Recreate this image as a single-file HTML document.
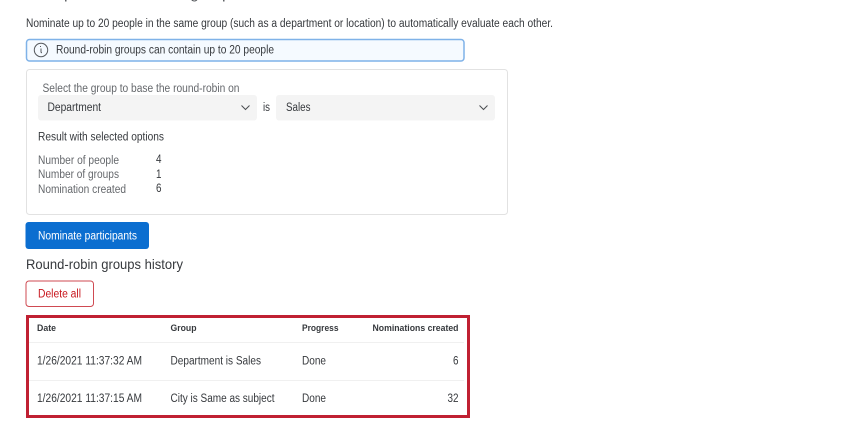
<!DOCTYPE html>
<html>
<head>
<meta charset="utf-8">
<style>
html,body{margin:0;padding:0;background:#fff;width:850px;height:425px;overflow:hidden}
svg{display:block}
text{font-family:"Liberation Sans",sans-serif;font-size:11.5px;fill:#36393d}
.g{fill:#65686c}
.h{font-size:9.5px;font-weight:bold;fill:#36393d}
</style>
</head>
<body>
<svg width="850" height="425" viewBox="0 0 850 425" xmlns="http://www.w3.org/2000/svg">
<text x="64" y="-2" style="font-size:16px;fill:#55585c">p</text>
<text x="190" y="-2" style="font-size:16px;fill:#55585c">g</text>
<text x="222" y="-2" style="font-size:16px;fill:#55585c">p</text>

<text x="26" y="27" textLength="527" lengthAdjust="spacingAndGlyphs">Nominate up to 20 people in the same group (such as a department or location) to automatically evaluate each other.</text>

<rect x="26.500" y="39.500" width="437.500" height="21.500" rx="3" fill="#f5faff" stroke="#7fb2e8" stroke-width="1.500"/>
<circle cx="41" cy="50" r="6.700" fill="none" stroke="#55585c" stroke-width="1"/>
<path d="M40 46.500h1M41 48.500v3.200q0 1 1 1" fill="none" stroke="#55585c" stroke-width="1"/>
<text x="56" y="53.500" textLength="218" lengthAdjust="spacingAndGlyphs">Round-robin groups can contain up to 20 people</text>

<rect x="26.500" y="69.500" width="481" height="145" rx="3" fill="#fff" stroke="#e2e2e2"/>
<text x="42.500" y="92" class="g" textLength="197" lengthAdjust="spacingAndGlyphs">Select the group to base the round-robin on</text>

<rect x="38" y="95" width="219" height="25.500" rx="3" fill="#f4f4f4"/>
<text x="47.500" y="111" textLength="53.500" lengthAdjust="spacingAndGlyphs">Department</text>
<path d="M241.500 105.500l4 4 4-4" fill="none" stroke="#4a4d51" stroke-width="1"/>
<text x="263" y="111" textLength="7" lengthAdjust="spacingAndGlyphs">is</text>
<rect x="276" y="95" width="219" height="25.500" rx="3" fill="#f4f4f4"/>
<text x="286" y="111" textLength="24.500" lengthAdjust="spacingAndGlyphs">Sales</text>
<path d="M479.500 105.500l4 4 4-4" fill="none" stroke="#4a4d51" stroke-width="1"/>

<text x="38" y="140.500" textLength="126" lengthAdjust="spacingAndGlyphs">Result with selected options</text>
<text x="38" y="164" class="g" textLength="81" lengthAdjust="spacingAndGlyphs">Number of people</text>
<text x="38" y="178" class="g" textLength="81" lengthAdjust="spacingAndGlyphs">Number of groups</text>
<text x="38" y="193" class="g" textLength="88" lengthAdjust="spacingAndGlyphs">Nomination created</text>
<text x="156" y="163" textLength="5.500" lengthAdjust="spacingAndGlyphs">4</text>
<text x="156" y="178" textLength="5.500" lengthAdjust="spacingAndGlyphs">1</text>
<text x="156" y="192" textLength="5.500" lengthAdjust="spacingAndGlyphs">6</text>

<rect x="25.500" y="222" width="123.500" height="27" rx="3" fill="#0b6ed0"/>
<text x="38" y="239.500" style="fill:#fff" textLength="99" lengthAdjust="spacingAndGlyphs">Nominate participants</text>

<text x="26" y="269" style="font-size:14px" textLength="157" lengthAdjust="spacingAndGlyphs">Round-robin groups history</text>

<rect x="26" y="281" width="67.500" height="25.500" rx="3" fill="#fff" stroke="#cf4a52"/>
<text x="38" y="297.500" style="fill:#c8161d" textLength="43" lengthAdjust="spacingAndGlyphs">Delete all</text>

<rect x="27.500" y="316.500" width="441" height="100" fill="#fff" stroke="#c02032" stroke-width="3"/>
<text x="37" y="331" class="h" textLength="19" lengthAdjust="spacingAndGlyphs">Date</text>
<text x="170.500" y="331" class="h" textLength="26" lengthAdjust="spacingAndGlyphs">Group</text>
<text x="302" y="331" class="h" textLength="36.500" lengthAdjust="spacingAndGlyphs">Progress</text>
<text x="372.500" y="331" class="h" textLength="86" lengthAdjust="spacingAndGlyphs">Nominations created</text>
<path d="M29 342.500H464M29 380.500H464" stroke="#f0f0f0" stroke-width="1"/>

<text x="37" y="364.500" textLength="105" lengthAdjust="spacingAndGlyphs">1/26/2021 11:37:32 AM</text>
<text x="170.500" y="364.500" textLength="90.500" lengthAdjust="spacingAndGlyphs">Department is Sales</text>
<text x="302" y="364.500" textLength="24" lengthAdjust="spacingAndGlyphs">Done</text>
<text x="453" y="364.500" textLength="5.500" lengthAdjust="spacingAndGlyphs">6</text>

<text x="37" y="402" textLength="105" lengthAdjust="spacingAndGlyphs">1/26/2021 11:37:15 AM</text>
<text x="170.500" y="402" textLength="104" lengthAdjust="spacingAndGlyphs">City is Same as subject</text>
<text x="302" y="402" textLength="24" lengthAdjust="spacingAndGlyphs">Done</text>
<text x="447.500" y="402" textLength="11" lengthAdjust="spacingAndGlyphs">32</text>
</svg>
</body>
</html>
